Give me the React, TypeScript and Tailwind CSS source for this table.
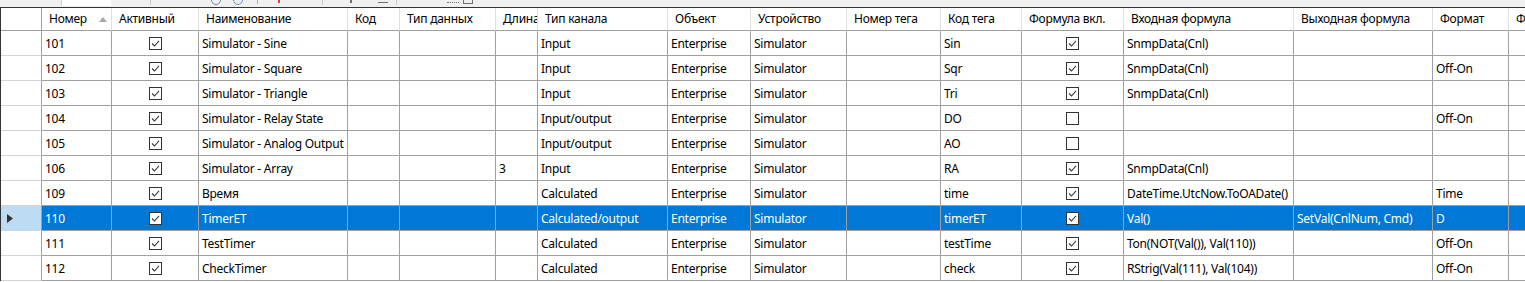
import React from 'react';

type Col = { key: string; title: string; w: string; check?: boolean };

const columns: Col[] = [
  { key: 'num', title: 'Номер', w: 'w-[70px]' },
  { key: 'active', title: 'Активный', w: 'w-[87px]', check: true },
  { key: 'name', title: 'Наименование', w: 'w-[149px]' },
  { key: 'code', title: 'Код', w: 'w-[52px]' },
  { key: 'dataType', title: 'Тип данных', w: 'w-[96px]' },
  { key: 'len', title: 'Длина', w: 'w-[42px]' },
  { key: 'chType', title: 'Тип канала', w: 'w-[130px]' },
  { key: 'obj', title: 'Объект', w: 'w-[83px]' },
  { key: 'device', title: 'Устройство', w: 'w-[96px]' },
  { key: 'tagNum', title: 'Номер тега', w: 'w-[94px]' },
  { key: 'tagCode', title: 'Код тега', w: 'w-[81px]' },
  { key: 'formulaOn', title: 'Формула вкл.', w: 'w-[102px]', check: true },
  { key: 'inFormula', title: 'Входная формула', w: 'w-[170px]' },
  { key: 'outFormula', title: 'Выходная формула', w: 'w-[139px]' },
  { key: 'format', title: 'Формат', w: 'w-[76px]' },
  { key: 'extra', title: 'Формат событий', w: 'w-[120px]' },
];

type Row = (string | boolean)[];

// num, active, name, code, dataType, len, chType, obj, device, tagNum, tagCode, formulaOn, in, out, format, extra
const rows: Row[] = [
  ['101', true, 'Simulator - Sine', '', '', '', 'Input', 'Enterprise', 'Simulator', '', 'Sin', true, 'SnmpData(Cnl)', '', '', ''],
  ['102', true, 'Simulator - Square', '', '', '', 'Input', 'Enterprise', 'Simulator', '', 'Sqr', true, 'SnmpData(Cnl)', '', 'Off-On', ''],
  ['103', true, 'Simulator - Triangle', '', '', '', 'Input', 'Enterprise', 'Simulator', '', 'Tri', true, 'SnmpData(Cnl)', '', '', ''],
  ['104', true, 'Simulator - Relay State', '', '', '', 'Input/output', 'Enterprise', 'Simulator', '', 'DO', false, '', '', 'Off-On', ''],
  ['105', true, 'Simulator - Analog Output', '', '', '', 'Input/output', 'Enterprise', 'Simulator', '', 'AO', false, '', '', '', ''],
  ['106', true, 'Simulator - Array', '', '', '3', 'Input', 'Enterprise', 'Simulator', '', 'RA', true, 'SnmpData(Cnl)', '', '', ''],
  ['109', true, 'Время', '', '', '', 'Calculated', 'Enterprise', 'Simulator', '', 'time', true, 'DateTime.UtcNow.ToOADate()', '', 'Time', ''],
  ['110', true, 'TimerET', '', '', '', 'Calculated/output', 'Enterprise', 'Simulator', '', 'timerET', true, 'Val()', 'SetVal(CnlNum, Cmd)', 'D', ''],
  ['111', true, 'TestTimer', '', '', '', 'Calculated', 'Enterprise', 'Simulator', '', 'testTime', true, 'Ton(NOT(Val()), Val(110))', '', 'Off-On', ''],
  ['112', true, 'CheckTimer', '', '', '', 'Calculated', 'Enterprise', 'Simulator', '', 'check', true, 'RStrig(Val(111), Val(104))', '', 'Off-On', ''],
];

const SELECTED = 7;

const CheckBox: React.FC<{ checked: boolean }> = ({ checked }) => (
  <svg width="13" height="13" viewBox="0 0 13 13" className="block">
    <rect x="0.5" y="0.5" width="12" height="12" fill="#fff" stroke="#333" />
    {checked && <path d="M3 6.5 L5.5 9 L10 3.8" fill="none" stroke="#3a3a3a" strokeWidth="1.1" />}
  </svg>
);

const Toolbar: React.FC = () => (
  <div className="h-[7px] bg-[#f0f0f0] flex items-start overflow-hidden">
    <div className="ml-[61px] w-[50px] h-[6px] bg-white border-l border-[#cfcfcf]" />
    <div className="ml-[39px] w-px h-[5px] bg-[#c8c8c8]" />
    <div className="ml-[60px] w-[10px] h-[10px] -mt-[5px] rounded-full border border-[#6d8fb8]" />
    <div className="ml-[12px] w-[10px] h-[10px] -mt-[5px] rounded-full border border-[#6d8fb8]" />
    <div className="ml-[14px] w-px h-[4px] bg-[#b0b0b0]" />
    <div className="ml-[20px] w-[2px] h-[3px] bg-[#d04040]" />
    <div className="ml-[42px] w-px h-[5px] bg-[#c8c8c8]" />
    <div className="ml-[27px] w-[2px] h-[3px] bg-[#707070]" />
    <div className="ml-[26px] w-[10px] h-[3px] border-b border-[#707070]" />
    <div className="ml-[8px] w-px h-[5px] bg-[#c8c8c8]" />
    <div className="ml-[50px] w-[12px] h-[3px] border-b border-dotted border-[#707070]" />
    <div className="ml-[4px] w-[10px] h-[4px] border border-t-0 border-[#707070]" />
  </div>
);

export default function App() {
  return (
    <div className="w-[1525px] h-[282px] overflow-hidden bg-white text-black font-['Segoe_UI','Noto_Sans',sans-serif] text-[12px] tracking-[-0.25px] leading-none">
      <Toolbar />
      <div className="border-t border-l border-[#333] bg-white">
        {/* header */}
        <div className="flex h-[23px]">
          <div className="w-[41px] shrink-0 border-r border-b border-[#a0a0a0]" />
          {columns.map((c) => (
            <div
              key={c.key}
              className={`${c.w} shrink-0 flex items-center justify-between pl-[7px] pr-[4px] border-r border-r-[#e0e0e0] border-b border-b-[#a0a0a0] whitespace-nowrap overflow-hidden`}
            >
              <span>{c.title}</span>
              {c.key === 'num' && (
                <svg width="8" height="5" viewBox="0 0 8 5" className="block">
                  <path d="M0 5 L4 0 L8 5 Z" fill="#a8a8a8" />
                </svg>
              )}
            </div>
          ))}
        </div>
        {/* rows */}
        {rows.map((r, i) => {
          const sel = i === SELECTED;
          return (
            <div key={i} className={`flex h-[25px] ${sel ? 'bg-[#0078d7] text-white' : ''}`}>
              <div
                className={`w-[41px] shrink-0 flex items-center pl-[6px] border-r border-r-[#a0a0a0] border-b border-b-[#d4d4d4] ${sel ? 'bg-[#bcdcf4]' : 'bg-white'}`}
              >
                {sel && (
                  <svg width="6" height="9" viewBox="0 0 6 9" className="block">
                    <path d="M0 0 L6 4.5 L0 9 Z" fill="#333" />
                  </svg>
                )}
              </div>
              {columns.map((c, j) => {
                const v = r[j];
                return (
                  <div
                    key={c.key}
                    className={`${c.w} shrink-0 flex items-center pt-px border-r border-b border-[#a0a0a0] whitespace-nowrap overflow-hidden ${c.check ? 'justify-center' : 'pl-[3px]'}`}
                  >
                    {c.check ? <CheckBox checked={v === true} /> : <span>{v as string}</span>}
                  </div>
                );
              })}
            </div>
          );
        })}
      </div>
    </div>
  );
}
